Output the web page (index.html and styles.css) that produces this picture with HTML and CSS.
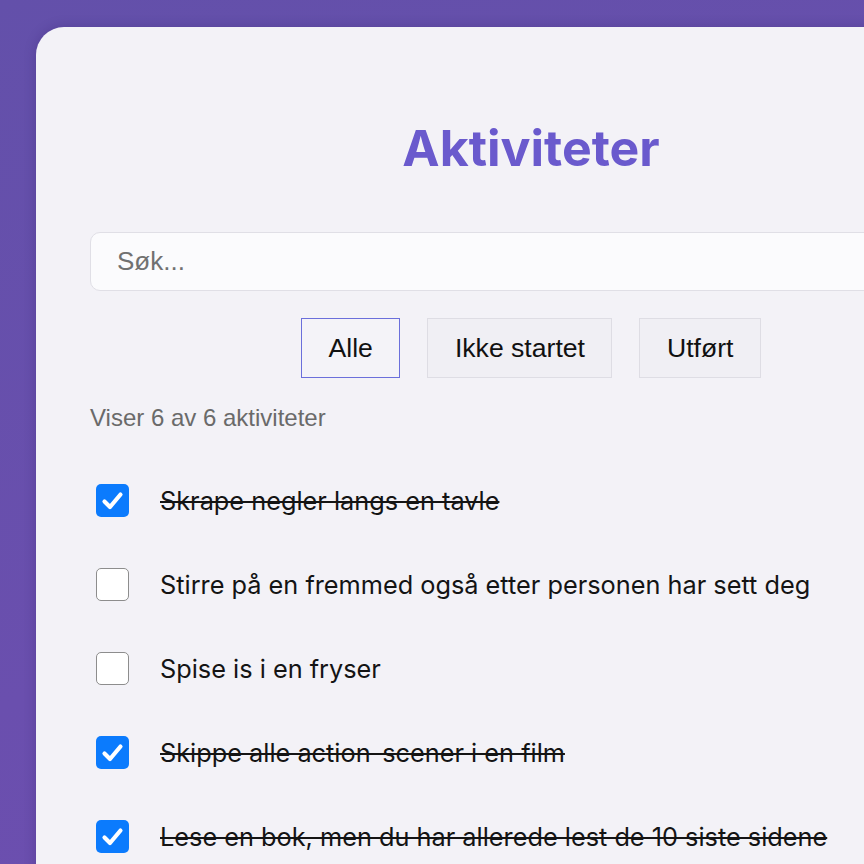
FILE: index.html
```html
<!DOCTYPE html>
<html lang="no">
<head>
<meta charset="utf-8">
<title>Aktiviteter</title>
<link rel="stylesheet" href="styles.css">
</head>
<body>
<div class="page">
  <main class="card">
    <h1 class="title">Aktiviteter</h1>
    <div class="search">
      <input class="search-input" type="text" placeholder="Søk...">
    </div>
    <div class="filters">
      <button class="filter filter-active">Alle</button>
      <button class="filter">Ikke startet</button>
      <button class="filter">Utført</button>
    </div>
    <p class="count">Viser 6 av 6 aktiviteter</p>
    <ul class="list">
      <li class="item done">
        <span class="box box-checked"><svg viewBox="0 0 33 33" width="33" height="33"><path d="M8.5 17.5 L14 23 L24.5 10.5" fill="none" stroke="#fff" stroke-width="4.2" stroke-linecap="round" stroke-linejoin="round"/></svg></span>
        <span class="label">Skrape negler langs en tavle</span>
      </li>
      <li class="item">
        <span class="box"></span>
        <span class="label">Stirre på en fremmed også etter personen har sett deg</span>
      </li>
      <li class="item">
        <span class="box"></span>
        <span class="label">Spise is i en fryser</span>
      </li>
      <li class="item done">
        <span class="box box-checked"><svg viewBox="0 0 33 33" width="33" height="33"><path d="M8.5 17.5 L14 23 L24.5 10.5" fill="none" stroke="#fff" stroke-width="4.2" stroke-linecap="round" stroke-linejoin="round"/></svg></span>
        <span class="label">Skippe alle action-scener i en film</span>
      </li>
      <li class="item done">
        <span class="box box-checked"><svg viewBox="0 0 33 33" width="33" height="33"><path d="M8.5 17.5 L14 23 L24.5 10.5" fill="none" stroke="#fff" stroke-width="4.2" stroke-linecap="round" stroke-linejoin="round"/></svg></span>
        <span class="label">Lese en bok, men du har allerede lest de 10 siste sidene</span>
      </li>
    </ul>
  </main>
</div>
</body>
</html>
```
FILE: styles.css
```css
html, body {
  margin: 0;
  padding: 0;
  height: 100%;
  overflow: hidden;
}
body {
  background: linear-gradient(160deg, #6350aa 0%, #6a4fae 60%, #6d4eb0 100%);
  font-family: "Liberation Sans", Arial, sans-serif;
}
.page {
  padding: 27px 0 0 36px;
}
.card {
  width: 990px;
  min-height: 1000px;
  box-sizing: border-box;
  padding: 92px 54px 0;
  background: #f3f2f7;
  border-radius: 28px;
  box-shadow: 0 0 12px rgba(40, 20, 90, 0.25);
}
.title {
  margin: 0;
  font-family: Inter, "Liberation Sans", sans-serif;
  font-weight: 700;
  font-size: 50px;
  line-height: 58px;
  color: #6a5acd;
  text-align: center;
}
.search {
  margin-top: 55px;
}
.search-input {
  display: block;
  width: 100%;
  height: 59px;
  box-sizing: border-box;
  padding: 0 26px;
  border: 1.5px solid #e0dfe6;
  border-radius: 10px;
  background: #fbfbfd;
  font-family: "Liberation Sans", Arial, sans-serif;
  font-size: 26px;
  color: #222;
  outline: none;
}
.search-input::placeholder {
  color: #717171;
}
.filters {
  margin-top: 27px;
  display: flex;
  justify-content: center;
  gap: 27px;
}
.filter {
  height: 60px;
  padding: 0 26.5px;
  border: 1px solid #dedde4;
  background: #f0eff4;
  font-family: "Liberation Sans", Arial, sans-serif;
  font-size: 26.6px;
  color: #111;
  border-radius: 0;
}
.filter-active {
  border: 1.5px solid #6b6fdb;
  background: #f4f3f8;
}
.count {
  margin: 26px 0 0;
  font-size: 24px;
  line-height: 28px;
  color: #6a6a6a;
}
.list {
  list-style: none;
  margin: 26px 0 0;
  padding: 0;
}
.item {
  height: 84px;
  display: flex;
  align-items: center;
  padding-left: 6px;
  gap: 31px;
}
.box {
  width: 33px;
  height: 33px;
  box-sizing: border-box;
  border: 1.5px solid #8d8d8d;
  border-radius: 5px;
  background: #fff;
  flex: none;
}
.box-checked {
  border: none;
  background: #0b7bfd;
}
.box svg {
  display: block;
}
.label {
  font-family: Inter, "Liberation Sans", sans-serif;
  font-size: 25.3px;
  color: #141414;
}
.done .label {
  text-decoration: line-through;
  text-decoration-thickness: 2px;
  text-decoration-color: #141414;
}
```
